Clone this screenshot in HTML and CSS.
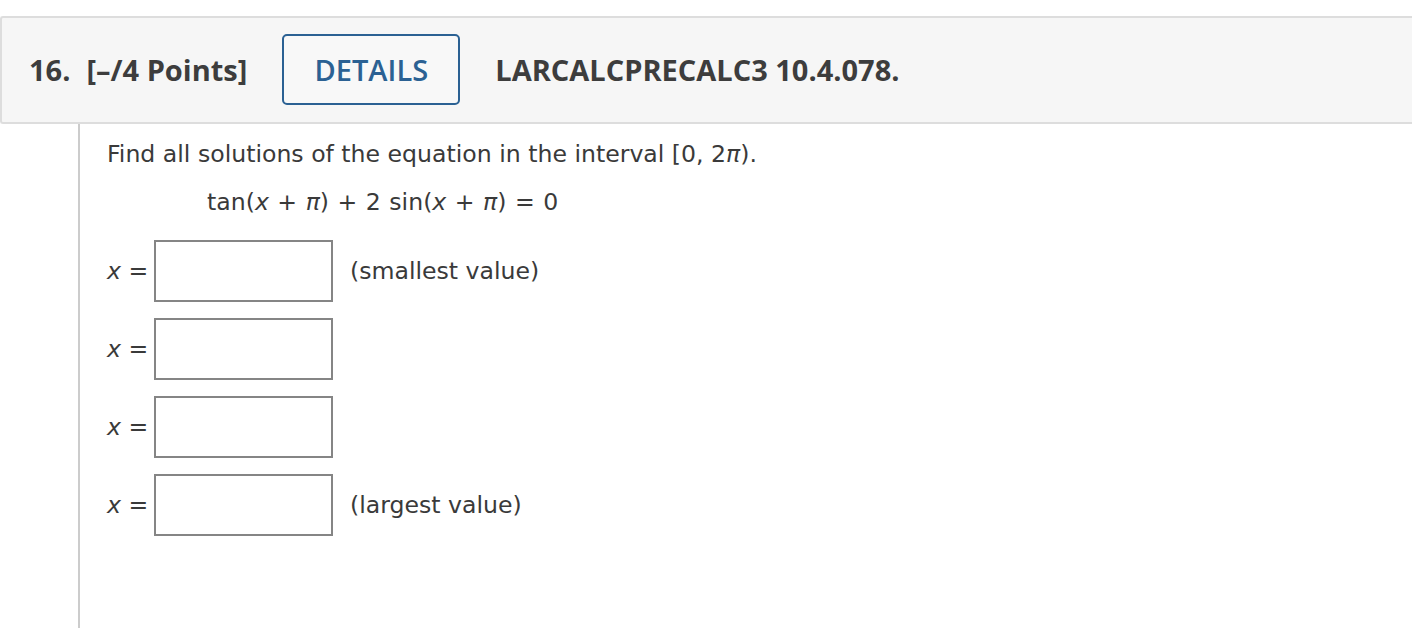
FILE: index.html
```html
<!DOCTYPE html>
<html>
<head>
<meta charset="utf-8">
<link rel="stylesheet" href="styles.css">
</head>
<body>
<div class="page">
  <div class="qhead">
    <span class="qnum">16.</span>
    <span class="qpts">[–/4 Points]</span>
    <button class="details">DETAILS</button>
    <span class="qref">LARCALCPRECALC3 10.4.078.</span>
  </div>
  <div class="qbody">
    <p class="prompt">Find all solutions of the equation in the interval [0, 2<i>π</i>).</p>
    <p class="eq">tan(<i>x</i> + <i>π</i>) + 2 sin(<i>x</i> + <i>π</i>) = 0</p>
    <div class="answers">
      <div class="row"><span class="lbl"><i>x</i> =</span><span class="box"></span><span class="note">(smallest value)</span></div>
      <div class="row"><span class="lbl"><i>x</i> =</span><span class="box"></span></div>
      <div class="row"><span class="lbl"><i>x</i> =</span><span class="box"></span></div>
      <div class="row"><span class="lbl"><i>x</i> =</span><span class="box"></span><span class="note">(largest value)</span></div>
    </div>
  </div>
</div>
</body>
</html>
```
FILE: styles.css
```css
html, body { margin: 0; padding: 0; background: #fff; }
body { width: 1412px; height: 628px; overflow: hidden; }
.page { padding-top: 16px; }
.qhead {
  display: flex;
  align-items: center;
  height: 102px;
  padding-bottom: 2px;
  box-sizing: content-box;
  background: #f6f6f6;
  border: 2px solid #dddddd;
  border-right: none;
  border-radius: 3px 0 0 3px;
  font-family: "Open Sans", sans-serif;
  font-weight: 700;
  font-size: 29px;
  color: #3d3d3d;
  padding-left: 27px;
}
.qnum { margin-right: 16px; }
.qpts { margin-right: 35px; }
.details {
  width: 178px;
  height: 71px;
  border: 2px solid #2b6193;
  border-radius: 5px;
  background: #f8f8f8;
  color: #2b6193;
  font-family: "Open Sans", sans-serif;
  font-weight: 600;
  font-size: 29px;
  padding: 0;
  margin-right: 35px;
  box-sizing: border-box;
}
.qbody {
  margin-left: 78px;
  border-left: 2px solid #cccccc;
  height: 504px;
  padding-left: 27px;
  font-family: "DejaVu Sans", Verdana, sans-serif;
  font-size: 23.6px;
  color: #3a3a3a;
}
.prompt { margin: 0; padding-top: 16px; line-height: 28px; }
.eq { margin: 0; padding-top: 20px; padding-left: 100px; line-height: 28px; word-spacing: 1px; }
.answers { padding-top: 24px; display: flex; flex-direction: column; gap: 16px; }
.row { display: flex; align-items: center; height: 62px; }
.lbl { width: 47px; }
.box {
  width: 179px;
  height: 62px;
  box-sizing: border-box;
  border: 2px solid #858585;
  background: #fff;
}
.note { margin-left: 17px; }
```
